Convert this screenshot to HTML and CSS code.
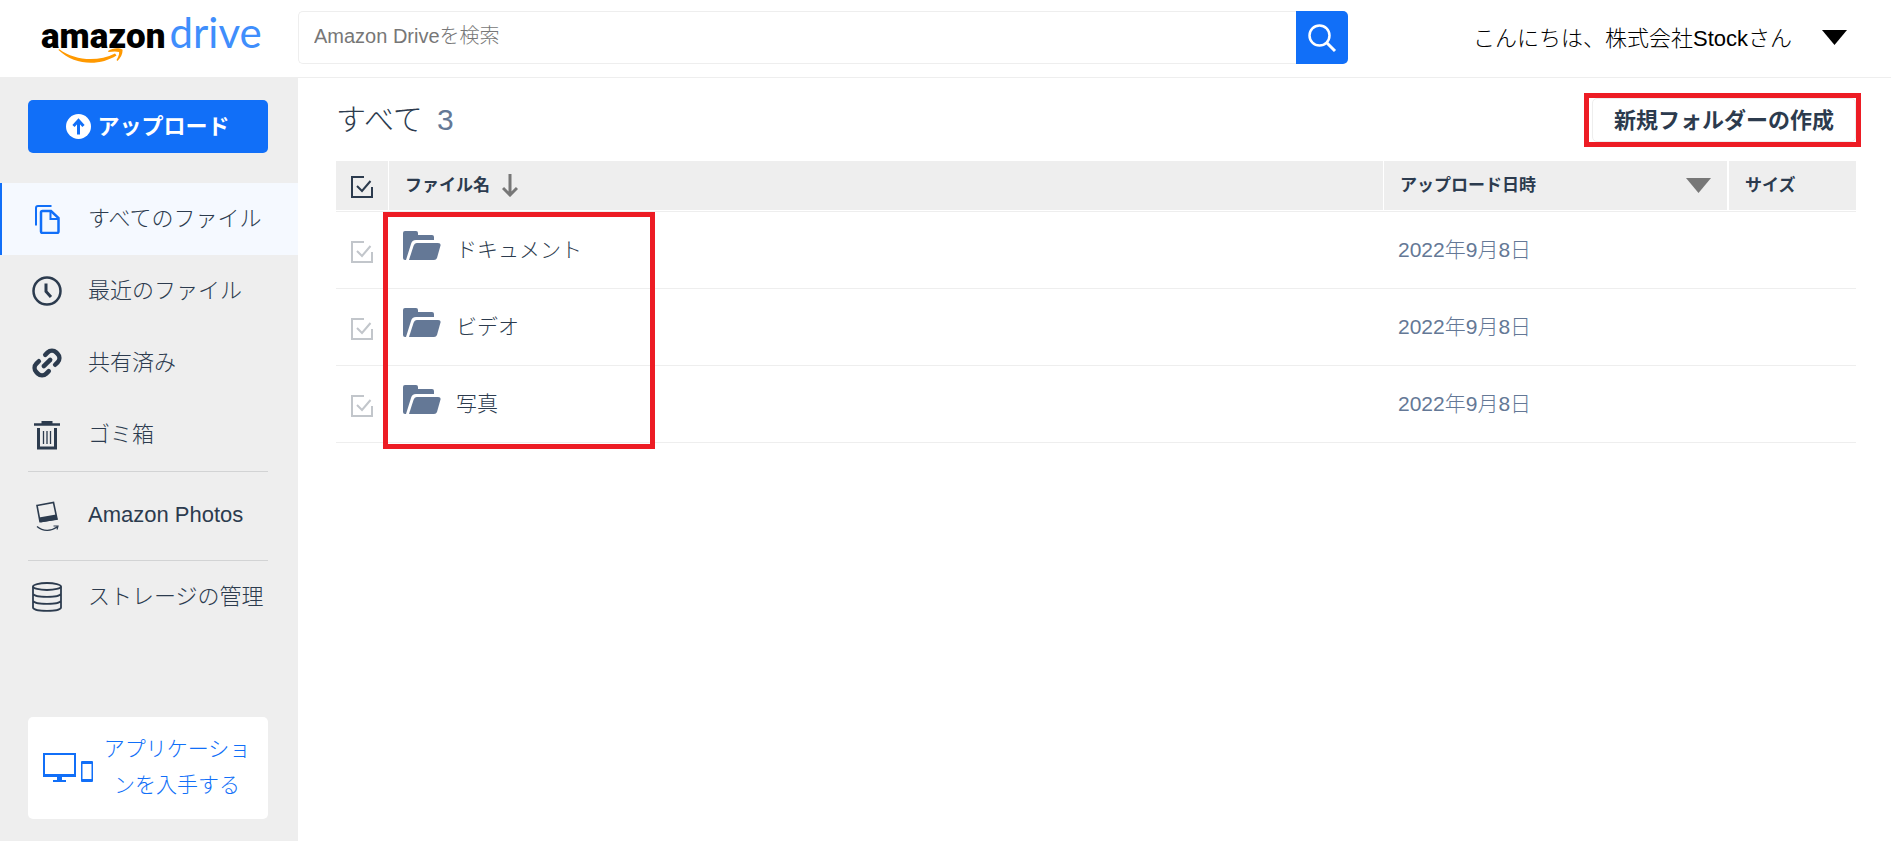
FILE: index.html
```html
<!DOCTYPE html>
<html lang="ja">
<head>
  <meta charset="UTF-8">
  <meta name="viewport" content="width=device-width, initial-scale=1.0">
  <title>Amazon Drive</title>
  <link rel="stylesheet" href="styles.css">
</head>
<body>

<header class="header">
  <a href="#" class="logo" aria-label="amazon drive">
    <span class="logo-amazon">amazon</span><span class="logo-drive">drive</span>
    <svg class="logo-smile" width="66" height="16" viewBox="0 0 66 16">
      <path d="M1 1C17 13 40 14 57 5.500L58.500 7.500C42 18 17 18 .5 2z" fill="#ff9900"/>
      <path d="M50 3C55-.5 61-.5 64.500 1.500C65 5 63 10 59.500 13L58.500 12C60.500 8.500 61.500 5.500 61 4C58 3 54 3.500 50.500 4z" fill="#ff9900"/>
    </svg>
  </a>
  <form class="search">
    <input type="text" class="search-input" placeholder="Amazon Driveを検索" aria-label="Amazon Driveを検索">
    <button type="button" class="search-button" aria-label="検索">
      <svg width="30" height="30" viewBox="0 0 30 30" fill="none" stroke="#fff" stroke-width="2.500">
        <circle cx="12.500" cy="12.500" r="10"/>
        <path d="M19.500 19.500l8.500 8.500" stroke-width="3"/>
      </svg>
    </button>
  </form>
  <button type="button" class="account">
    <span>こんにちは、株式会社Stockさん</span>
    <svg width="25" height="15" viewBox="0 0 25 15"><path d="M0 0h25L12.500 15z"/></svg>
  </button>
</header>

<div class="page">
  <aside class="sidebar">
    <button type="button" class="upload">
      <svg width="25" height="25" viewBox="0 0 25 25">
        <circle cx="12.500" cy="12.500" r="12.500" fill="#fff"/>
        <path d="M12.500 20.500V6.500M7.500 12l5-5.500 5 5.500" fill="none" stroke="#116ff8" stroke-width="3"/>
      </svg>
      <span>アップロード</span>
    </button>

    <nav class="nav">
      <a href="#" class="nav-item active">
        <svg width="30" height="30" viewBox="0 0 30 30" fill="none" stroke="#116ff8" stroke-width="2">
          <path d="M4 21.500V4q0-2 2-2h13.500"/>
          <path d="M10.500 7H19l7.500 7v13.500q0 1.500-1.500 1.500H10.500Q9 29 9 27.500v-19Q9 7 10.500 7z" stroke-width="2.500"/>
          <path d="M18.500 7.500v7.500h7.500"/>
        </svg>
        <span>すべてのファイル</span>
      </a>
      <a href="#" class="nav-item">
        <svg width="30" height="30" viewBox="0 0 30 30" fill="none" stroke="#2c3b4e" stroke-width="2.500">
          <circle cx="15" cy="15" r="13.500"/>
          <path d="M14 7.500v8l5 5.500" stroke-width="3"/>
        </svg>
        <span>最近のファイル</span>
      </a>
      <a href="#" class="nav-item">
        <svg width="30" height="30" viewBox="0 0 30 30" fill="none" stroke="#2c3b4e" stroke-width="4.500" stroke-linecap="round">
          <g transform="rotate(-45 15 15)">
            <path d="M10.500 22H7a6 6 0 0 1-6-6v-2a6 6 0 0 1 6-6h3.500"/>
            <path d="M19.500 8H23a6 6 0 0 1 6 6v2a6 6 0 0 1-6 6h-3.500"/>
            <path d="M10.500 15h9"/>
          </g>
        </svg>
        <span>共有済み</span>
      </a>
      <a href="#" class="nav-item">
        <svg width="30" height="30" viewBox="0 0 30 30" fill="none" stroke="#2c3b4e">
          <path d="M2 4.500h26" stroke-width="2.500"/>
          <path d="M9.500 2.500h11" stroke-width="3"/>
          <path d="M6.500 8v20h17V8" stroke-width="3"/>
          <path d="M11.500 11v13M15 11v13M18.500 11v13" stroke-width="1.300"/>
        </svg>
        <span>ゴミ箱</span>
      </a>
      <hr class="divider">
      <a href="#" class="nav-item photos">
        <svg width="30" height="30" viewBox="0 0 30 30" fill="none" stroke="#2c3b4e">
          <path d="M5 4.500L21.500 1.500L25 18L8 20.500z" stroke-width="1.600"/>
          <path d="M7 16.500L24 13.500L25.500 18.500L8.500 21.500z" fill="#2c3b4e" stroke="none"/>
          <path d="M5 25.500c6 5 14 5 20 .5M21.500 25h4.500l-1 3.500" stroke-width="1.200"/>
        </svg>
        <span>Amazon Photos</span>
      </a>
      <hr class="divider">
      <a href="#" class="nav-item">
        <svg width="30" height="30" viewBox="0 0 30 30" fill="none" stroke="#2c3b4e" stroke-width="1.800">
          <ellipse cx="15" cy="4.500" rx="14" ry="3.500"/>
          <path d="M1 4.500v21c0 4.500 28 4.500 28 0v-21M1 11.500c0 4.500 28 4.500 28 0M1 18.500c0 4.500 28 4.500 28 0"/>
        </svg>
        <span>ストレージの管理</span>
      </a>
    </nav>

    <a href="#" class="get-app">
      <svg width="50" height="31" viewBox="0 0 50 31">
        <path d="M1 2h31v21H1z" fill="none" stroke="#116ff8" stroke-width="2"/>
        <path d="M0 22h33v3H0zM14 24h5v4h4v2H10v-2h4z" fill="#116ff8"/>
        <path d="M39 9h10q1 0 1 1v19q0 1-1 1H39q-1 0-1-1V10q0-1 1-1zM39.500 12v15h9V12z" fill="#116ff8" fill-rule="evenodd"/>
      </svg>
      <span>アプリケーションを入手する</span>
    </a>
  </aside>

  <main class="main">
    <div class="title-bar">
      <h1 class="title">すべて <span class="count">3</span></h1>
      <div class="new-folder-box">
        <button type="button" class="new-folder">新規フォルダーの作成</button>
        <span class="highlight highlight-button"></span>
      </div>
    </div>

    <div class="files-box">
      <table class="files">
        <thead>
          <tr>
            <th class="col-check">
              <label class="check">
                <input type="checkbox" aria-label="すべて選択">
                <svg width="22" height="22" viewBox="0 0 22 22"><path d="M13 1H1v20h20V11M6 10l5 5 8.500-10"/></svg>
              </label>
            </th>
            <th class="col-name">
              <div class="th-name">
                <span>ファイル名</span>
                <svg width="16" height="23" viewBox="0 0 16 23" fill="none" stroke="#777" stroke-width="3"><path d="M8 0v21M1 14l7 7 7-7"/></svg>
              </div>
            </th>
            <th class="col-date">
              <div class="th-date">
                <span>アップロード日時</span>
                <svg width="25" height="15" viewBox="0 0 25 15" fill="#777"><path d="M0 0h25L12.500 15z"/></svg>
              </div>
            </th>
            <th class="col-size"><span>サイズ</span></th>
          </tr>
        </thead>
        <tbody>
          <tr>
            <td class="col-check">
              <label class="check">
                <input type="checkbox" aria-label="ドキュメント">
                <svg width="22" height="22" viewBox="0 0 22 22"><path d="M13 1H1v20h20V11M6 10l5 5 8.500-10"/></svg>
              </label>
            </td>
            <td>
              <a href="#" class="file">
                <svg width="38" height="30" viewBox="0 0 38 30" fill="#647896"><path d="M0 2q0-2 2-2h11q2 0 2 2v2h14q2 0 2 2v3H13q-4 0-5 4L3 29H2q-2 0-2-2z"/><path d="M14 12h21q3 0 2.500 2.500L34 27q-.8 2-3 2H6l4.500-14q1-3 3.500-3z"/></svg>
                <span>ドキュメント</span>
              </a>
            </td>
            <td class="date">2022年9月8日</td>
            <td></td>
          </tr>
          <tr>
            <td class="col-check">
              <label class="check">
                <input type="checkbox" aria-label="ビデオ">
                <svg width="22" height="22" viewBox="0 0 22 22"><path d="M13 1H1v20h20V11M6 10l5 5 8.500-10"/></svg>
              </label>
            </td>
            <td>
              <a href="#" class="file">
                <svg width="38" height="30" viewBox="0 0 38 30" fill="#647896"><path d="M0 2q0-2 2-2h11q2 0 2 2v2h14q2 0 2 2v3H13q-4 0-5 4L3 29H2q-2 0-2-2z"/><path d="M14 12h21q3 0 2.500 2.500L34 27q-.8 2-3 2H6l4.500-14q1-3 3.500-3z"/></svg>
                <span>ビデオ</span>
              </a>
            </td>
            <td class="date">2022年9月8日</td>
            <td></td>
          </tr>
          <tr>
            <td class="col-check">
              <label class="check">
                <input type="checkbox" aria-label="写真">
                <svg width="22" height="22" viewBox="0 0 22 22"><path d="M13 1H1v20h20V11M6 10l5 5 8.500-10"/></svg>
              </label>
            </td>
            <td>
              <a href="#" class="file">
                <svg width="38" height="30" viewBox="0 0 38 30" fill="#647896"><path d="M0 2q0-2 2-2h11q2 0 2 2v2h14q2 0 2 2v3H13q-4 0-5 4L3 29H2q-2 0-2-2z"/><path d="M14 12h21q3 0 2.500 2.500L34 27q-.8 2-3 2H6l4.500-14q1-3 3.500-3z"/></svg>
                <span>写真</span>
              </a>
            </td>
            <td class="date">2022年9月8日</td>
            <td></td>
          </tr>
        </tbody>
      </table>
      <span class="highlight highlight-files"></span>
    </div>
  </main>
</div>

</body>
</html>
```
FILE: styles.css
```css
* {
  box-sizing: border-box;
}

body {
  margin: 0;
  min-height: 100vh;
  display: flex;
  flex-direction: column;
  font-family: "Liberation Sans", "Noto Sans CJK JP", sans-serif;
  font-size: 22px;
  font-weight: 300;
  color: #2c3b4e;
  background-color: #fff;
}

a {
  color: inherit;
  text-decoration: none;
}

button {
  font: inherit;
  color: inherit;
  border: none;
  background: none;
  padding: 0;
  cursor: pointer;
}

svg {
  display: block;
  flex: none;
}

/* header */
.header {
  display: flex;
  align-items: center;
  height: 78px;
  padding-right: 44px;
  padding-bottom: 2px;
  border-bottom: 1px solid #eee;
}

.logo {
  position: relative;
  flex: none;
  display: flex;
  align-items: baseline;
  gap: 4px;
  width: 298px;
  height: 64px;
  padding-left: 41px;
  line-height: 52px;
}

.logo-amazon {
  font-family: Roboto, sans-serif;
  font-size: 35px;
  font-weight: 900;
  color: #000;
}

.logo-drive {
  font-family: Lato, sans-serif;
  font-size: 42px;
  font-weight: 400;
  color: #3f8efc;
}

.logo-smile {
  position: absolute;
  left: 58px;
  top: 42px;
}

.search {
  flex: 1;
  display: flex;
  height: 53px;
  max-width: 1050px;
}

.search-input {
  flex: 1;
  padding: 0 15px 2px;
  border: 1px solid #eee;
  border-right: none;
  border-radius: 5px 0 0 5px;
  font: inherit;
  font-size: 20px;
  outline: none;
}

.search-input::placeholder {
  color: #777;
}

.search-button {
  display: flex;
  align-items: center;
  justify-content: center;
  width: 52px;
  background-color: #116ff8;
  border-radius: 0 5px 5px 0;
}

.account {
  display: flex;
  align-items: center;
  gap: 30px;
  margin-left: auto;
  color: #000;
}

.account span {
  padding-bottom: 4px;
}

/* sidebar */
.page {
  flex: 1;
  display: flex;
}

.sidebar {
  flex: none;
  display: flex;
  flex-direction: column;
  width: 298px;
  padding: 22px 0;
  background-color: #eee;
}

.upload {
  display: flex;
  align-items: center;
  justify-content: center;
  gap: 6px;
  height: 53px;
  margin: 0 30px 30px 28px;
  border-radius: 5px;
  background-color: #116ff8;
  color: #fff;
  font-weight: bold;
}

.upload span,
.nav-item span {
  padding-bottom: 6px;
}

.nav-item {
  display: flex;
  align-items: center;
  gap: 26px;
  height: 72px;
  padding-left: 32px;
}

.nav-item.active {
  padding-left: 30px;
  border-left: 2px solid #116ff8;
  background-color: #f5f9ff;
}

.nav-item.photos {
  height: 88px;
}

.nav-item.photos span {
  padding-bottom: 2px;
}

.divider {
  height: 1px;
  margin: 0 30px 0 28px;
  border: none;
  background-color: #d2d3d4;
}

.get-app {
  display: flex;
  align-items: center;
  gap: 8px;
  margin: auto 30px 0 28px;
  padding: 14px 15px 16px;
  border-radius: 5px;
  background-color: #fff;
  color: #116ff8;
  font-size: 21px;
  line-height: 36px;
  text-align: center;
}

/* main */
.main {
  flex: 1;
  padding: 20px 35px 0 38px;
}

.title-bar {
  display: flex;
  align-items: center;
  justify-content: space-between;
  height: 44px;
  margin-bottom: 19px;
}

.title {
  margin: 0;
  padding-bottom: 6px;
  font-size: 30px;
  font-weight: 300;
}

.count {
  margin-left: 6px;
  color: #647896;
}

.new-folder-box,
.files-box {
  position: relative;
}

.new-folder {
  height: 44px;
  padding: 0 21px 4px;
  border: 1px solid #eee;
  border-radius: 5px;
  font-weight: bold;
}

.highlight {
  position: absolute;
  border: 5px solid #ed1c24;
  pointer-events: none;
}

.highlight-button {
  top: -5px;
  right: -5px;
  bottom: -5px;
  left: -8px;
}

.highlight-files {
  top: 51px;
  left: 47px;
  width: 272px;
  bottom: -6px;
}

.files {
  width: 100%;
  table-layout: fixed;
  border-collapse: separate;
  border-spacing: 0;
}

.files th {
  height: 50px;
  padding: 0 16px;
  border-right: 1px solid #fff;
  border-bottom: 1px solid #fff;
  background-color: #eee;
  font-size: 17px;
  font-weight: bold;
  text-align: left;
}

.files th span {
  display: block;
  padding-bottom: 4px;
}

.files td {
  height: 77px;
  padding: 0 14px 4px;
  border-bottom: 1px solid #eee;
  font-size: 21px;
}

.files tbody tr:first-child td {
  height: 78px;
  border-top: 1px solid #eee;
}

.files .col-check {
  width: 53px;
  padding: 3px 0 0 15px;
}

.files .col-date {
  width: 345px;
  border-right-width: 2px;
}

.files .col-size {
  width: 127px;
  border-right: none;
}

.th-name,
.th-date {
  display: flex;
  align-items: center;
  gap: 12px;
}

.th-date {
  justify-content: space-between;
}

.check {
  position: relative;
  display: block;
  width: 22px;
  height: 22px;
}

.check input {
  position: absolute;
  inset: 0;
  width: 100%;
  height: 100%;
  margin: 0;
  opacity: 0;
}

.check svg {
  fill: none;
  stroke: #2c3b4e;
  stroke-width: 2;
}

td .check svg {
  stroke: #c2c6cb;
}

.file {
  display: flex;
  align-items: center;
  gap: 15px;
}

.file svg {
  margin-bottom: 4px;
}

.date {
  color: #647896;
}
```
